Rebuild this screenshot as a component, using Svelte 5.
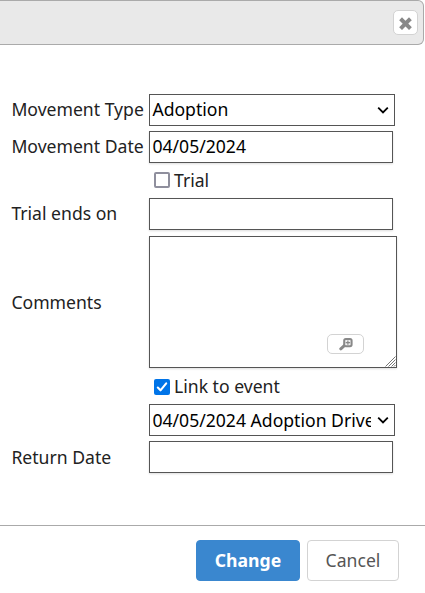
<script>
  let movementType = $state('Adoption');
  let movementDate = $state('04/05/2024');
  let trial = $state(false);
  let trialEnds = $state('');
  let comments = $state('');
  let linked = $state(true);
  let returnDate = $state('');
</script>

{#snippet chevron()}
  <svg class="chevron" width="12" height="8" viewBox="0 0 12 8"><path d="M1.2 1.6 6 6.4 10.8 1.6" fill="none" stroke="#000" stroke-width="1.8" /></svg>
{/snippet}

{#snippet check(on)}
  <span class="box" class:on>
    {#if on}
      <svg width="16" height="16" viewBox="0 0 16 16"><path d="M3.8 8.6 6.5 11.3 12.2 4.3" fill="none" stroke="#fff" stroke-width="2.1" stroke-linecap="round" stroke-linejoin="round" /></svg>
    {/if}
  </span>
{/snippet}

<div class="dialog">
  <header>
    <button class="close" aria-label="Close">
      <svg width="13" height="13" viewBox="0 0 13 13"><path d="M3 3.2 10 10.2M10 3.2 3 10.2" stroke="#888" stroke-width="4" stroke-linecap="square" stroke-linejoin="round" /></svg>
    </button>
  </header>

  <main>
    <div class="row type">
      <span class="label">Movement Type</span>
      <div class="select"><span>{movementType}</span>{@render chevron()}</div>
    </div>
    <div class="row date">
      <label class="label" for="date">Movement Date</label>
      <input id="date" bind:value={movementDate} />
    </div>
    <div class="row option">
      <button class="toggle" role="checkbox" aria-checked={trial} onclick={() => (trial = !trial)}>{@render check(trial)}Trial</button>
    </div>
    <div class="row ends">
      <label class="label" for="ends">Trial ends on</label>
      <input id="ends" bind:value={trialEnds} />
    </div>
    <div class="row comments">
      <label class="label" for="comments">Comments</label>
      <div class="area">
        <textarea id="comments" bind:value={comments}></textarea>
        <button class="zoom" aria-label="Expand">
          <svg width="14" height="14" viewBox="0 0 14 14">
            <path d="M5.6 8.4 1.8 11.8" stroke="#888" stroke-width="3" stroke-linecap="round" />
            <rect x="5.2" y="2" width="7.4" height="7.2" rx="1.6" fill="#eee" stroke="#888" stroke-width="2" />
            <path d="M8.9 3.4V7.8M6.7 5.6H11.1" stroke="#888" stroke-width="1.2" />
          </svg>
        </button>
        <svg class="grip" width="11" height="11" viewBox="0 0 11 11"><path d="M.5 10.5 10.5.5M3.5 10.5 10.5 3.5M6.5 10.5 10.5 6.5M9 10.5 10.5 9" stroke="#666" stroke-width=".9" /></svg>
      </div>
    </div>
    <div class="row option link">
      <button class="toggle" role="checkbox" aria-checked={linked} onclick={() => (linked = !linked)}>{@render check(linked)}<span class="caption">Link to event</span></button>
    </div>
    <div class="row event">
      <div class="select"><span>04/05/2024 Adoption Drive</span>{@render chevron()}</div>
    </div>
    <div class="row date return">
      <label class="label" for="return">Return Date</label>
      <input id="return" bind:value={returnDate} />
    </div>
  </main>

  <footer>
    <button class="primary">Change</button>
    <button class="secondary">Cancel</button>
  </footer>
</div>

<style>
  :global(body) { background: #fff; overflow: hidden; }
  .dialog, .dialog * { box-sizing: border-box; }
  .dialog {
    width: 425px;
    height: 593px;
    display: flex;
    flex-direction: column;
    font: 17.6px/24px "Noto Sans", sans-serif;
    color: #222;
  }
  button, input, textarea { font: inherit; margin: 0; }
  svg { display: block; flex: none; }
  header {
    width: 424px;
    height: 45px;
    flex: none;
    display: flex;
    justify-content: flex-end;
    padding: 9px 5px 0 0;
    background: #e9e9e9;
    border: 1px solid #aaa;
    border-left: 0;
    border-radius: 0 6px 6px 0;
  }
  .close {
    width: 25px;
    height: 25px;
    padding: 1px 0 0;
    display: flex;
    align-items: center;
    justify-content: center;
    background: #fff;
    border: 1px solid #d3d3d3;
    border-radius: 5px;
  }
  main { height: 480px; flex: none; padding: 49px 0 0 11px; }
  .row { display: flex; align-items: center; height: 32px; }
  .label { width: 138px; flex: none; padding: 0 0 2px .4px; white-space: nowrap; }
  .comments .label, .return .label { padding-bottom: 0; }
  .date { margin-top: 5px; }
  .option { height: 16px; margin: 9px 0 0 143px; }
  .ends { margin-top: 10px; }
  .comments { height: 132px; margin-top: 6px; }
  .link { margin-top: 11px; }
  .event { margin: 9px 0 0 138px; }
  input, .select, textarea {
    background: #fff;
    border: 1px solid #555;
    border-radius: 0;
    color: #000;
    outline: 0;
  }
  input { width: 244px; height: 32px; padding: 0 2.4px 2px; box-shadow: 0 1px 2px #0002; }
  .select { width: 246px; height: 32px; display: flex; align-items: center; padding: 0 5.5px 0 2.4px; }
  .select span { width: 218.6px; overflow: hidden; white-space: nowrap; }
  .type .select span { padding-bottom: 2px; }
  .chevron { margin-left: auto; }
  .area { position: relative; width: 248px; height: 132px; }
  textarea { display: block; width: 100%; height: 100%; resize: none; box-shadow: 0 1px 2px #0002; }
  .zoom {
    position: absolute;
    left: 178px;
    top: 98px;
    width: 37px;
    height: 20px;
    display: flex;
    align-items: center;
    justify-content: center;
    padding: 0;
    background: #fff;
    border: 1px solid #d3d3d3;
    border-radius: 5px;
  }
  .grip { position: absolute; right: 1px; bottom: 1px; }
  .toggle { display: flex; align-items: center; gap: 4px; padding: 0; border: 0; background: none; color: #222; white-space: nowrap; }
  .caption { padding-bottom: 2px; }
  .box { width: 16px; height: 16px; border: 2px solid #8f8f9d; border-radius: 2px; background: #fff; }
  .box.on { border: 0; background: #0074e8; }
  footer {
    flex: 1;
    display: flex;
    align-items: flex-start;
    justify-content: flex-end;
    gap: 7px;
    padding: 14px 26px 0 0;
    border-top: 1px solid #aaa;
  }
  footer button { height: 41px; padding: 0 0 2px; border-radius: 4px; }
  .primary { width: 104px; background: #3a87cf; border: 1px solid #3a87cf; color: #fff; font-weight: bold; }
  .secondary { width: 92px; background: #fff; border: 1px solid #d3d3d3; color: #555; }
</style>
